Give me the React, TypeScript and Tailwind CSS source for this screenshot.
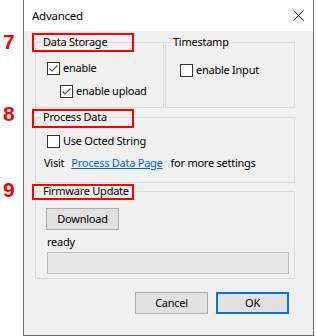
import React from "react";

const font = { fontFamily: '"Noto Sans", "Open Sans", sans-serif' };

function Check({ checked }: { checked?: boolean }) {
  return (
    <span className="flex h-[13px] w-[13px] shrink-0 items-center justify-center border border-[#333333] bg-white">
      {checked && (
        <svg width="11" height="11" viewBox="0 0 11 11">
          <path d="M1.5 5.5 L4 8 L9.5 2.5" fill="none" stroke="#555555" strokeWidth="1.2" />
        </svg>
      )}
    </span>
  );
}

function CheckRow({ checked, label, className = "" }: { checked?: boolean; label: string; className?: string }) {
  return (
    <div className={"flex items-center gap-[3px] " + className}>
      <Check checked={checked} />
      <span className="leading-[16px] text-black">{label}</span>
    </div>
  );
}

function Btn({ label, primary }: { label: string; primary?: boolean }) {
  return (
    <div
      className={
        "flex h-[22px] w-[73px] items-center justify-center bg-[#e1e1e1] text-black " +
        (primary ? "border-2 border-[#0078d7]" : "border border-[#adadad]")
      }
    >
      {label}
    </div>
  );
}

function Group({ title, className = "", legendMl = "ml-[6px]", children }: { title: string; className?: string; legendMl?: string; children?: React.ReactNode }) {
  return (
    <fieldset className={"border border-[#dcdcdc] " + className}>
      <legend className={"px-[2px] leading-[16px] text-black " + legendMl}>{title}</legend>
      {children}
    </fieldset>
  );
}

function Annot({ n, top }: { n: string; top: string }) {
  return (
    <div
      className={"absolute left-[3px] text-[21px] font-bold leading-[18px] text-[#ff0000] " + top}
      style={{ fontFamily: '"Liberation Sans", Arial, sans-serif' }}
    >
      {n}
    </div>
  );
}

export default function App() {
  return (
    <div className="relative h-[336px] w-[316px] overflow-hidden bg-white text-[11px] tracking-[-0.25px]" style={font}>
      <div className="ml-[23px] flex h-[336px] w-[291px] flex-col border-x border-b border-[#6e6e6e] bg-[#f0f0f0]">
        <div className="flex h-[31px] shrink-0 items-center justify-between bg-white pl-[8px] pr-[9px]">
          <span className="text-[11.5px] text-black">Advanced</span>
          <svg width="11" height="11" viewBox="0 0 11 11">
            <path d="M0.5 0.5 L10.5 10.5 M10.5 0.5 L0.5 10.5" stroke="#000" strokeWidth="1" />
          </svg>
        </div>
        <div className="flex flex-col pl-[11px] pr-[18px] pt-[3px]">
          <div className="flex h-[74px] gap-[1px]">
            <Group title="Data Storage" className="h-[74px] w-[129px]" legendMl="ml-[5px]">
              <CheckRow checked label="enable" className="ml-[11px] mt-[10px]" />
              <CheckRow checked label="enable upload" className="ml-[24px] mt-[7px]" />
            </Group>
            <Group title="Timestamp" className="h-[74px] flex-1" legendMl="ml-[5px]">
              <CheckRow label="enable Input" className="ml-[14px] mt-[12px]" />
            </Group>
          </div>
          <Group title="Process Data" className="mt-[1px] h-[74px]" legendMl="ml-[5px]">
            <CheckRow label="Use Octed String" className="ml-[11px] mt-[8px]" />
            <div className="ml-[8px] mt-[6px] flex leading-[16px] text-black">
              <span>Visit</span>
              <span className="ml-[7px] text-[#0066cc] underline decoration-[#0066cc] underline-offset-1">Process Data Page</span>
              <span className="ml-[8px]">for more settings</span>
            </div>
          </Group>
          <Group title="Firmware Update" className="h-[96px]" legendMl="ml-[5px]">
            <div className="ml-[10px] mt-[9px]">
              <Btn label="Download" />
            </div>
            <div className="ml-[11px] mt-[4px] leading-[16px] text-black">ready</div>
            <div className="ml-[11px] mr-[5px] mt-[2px] h-[22px] border border-[#bcbcbc] bg-[#e6e6e6]" />
          </Group>
          <div className="mt-[13px] flex justify-end gap-[8px] pr-[6px]">
            <Btn label="Cancel" />
            <Btn label="OK" primary />
          </div>
        </div>
      </div>

      <div className="absolute left-[32px] top-[33px] h-[19px] w-[102px] border-2 border-[#ff0000]" />
      <div className="absolute left-[32px] top-[109px] h-[19px] w-[102px] border-2 border-[#ff0000]" />
      <div className="absolute left-[32px] top-[184px] h-[16px] w-[102px] border-2 border-[#ff0000]" />
      <Annot n="7" top="top-[33px]" />
      <Annot n="8" top="top-[105px]" />
      <Annot n="9" top="top-[181px]" />
    </div>
  );
}
